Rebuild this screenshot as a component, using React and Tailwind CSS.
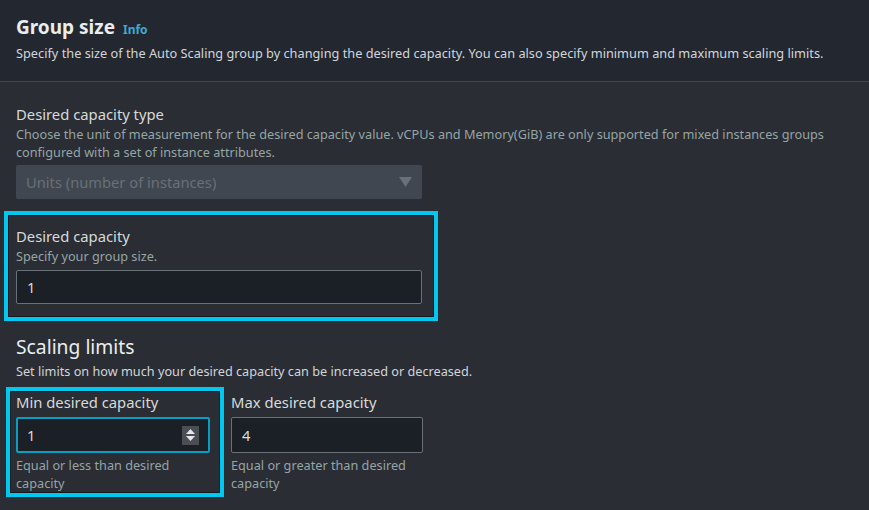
import React from 'react';

const font = { fontFamily: '"Noto Sans", "Open Sans", sans-serif' };

const Stepper = () => (
  <div className="w-[17px] h-[19px] bg-[#4b4f55] flex flex-col items-center justify-center gap-[2px]">
    <svg width="9" height="5" viewBox="0 0 9 5"><path d="M4.5 0 L9 5 L0 5 Z" fill="#e6e6e6" /></svg>
    <svg width="9" height="5" viewBox="0 0 9 5"><path d="M0 0 L9 0 L4.5 5 Z" fill="#e6e6e6" /></svg>
  </div>
);

export default function App() {
  return (
    <div className="w-[869px] h-[510px] overflow-hidden bg-[#2a2d33] text-[#d5dbdb]" style={font}>
      <div className="bg-[#232830] h-[82px] px-4 pt-[14px] border-b border-[#414750]">
        <div className="flex items-baseline gap-2">
          <h2 className="text-[19px] font-bold text-[#eaeded] leading-[26px]">Group size</h2>
          <span className="text-[12px] font-bold text-[#3fa9d5]">Info</span>
        </div>
        <p className="text-[12.75px] text-[#d1d5db] mt-[3px] leading-[20px]">
          Specify the size of the Auto Scaling group by changing the desired capacity. You can also specify minimum and maximum scaling limits.
        </p>
      </div>

      <div className="px-4 pt-[22px]">
        <div className="text-[14.8px] text-[#d5dbdb] leading-[20px]">Desired capacity type</div>
        <p className="text-[12.7px] text-[#95a5a6] leading-[18px] mt-[1px] w-[820px]">
          Choose the unit of measurement for the desired capacity value. vCPUs and Memory(GiB) are only supported for mixed instances groups configured with a set of instance attributes.
        </p>
        <div className="mt-[4px] w-[406px] h-[34px] bg-[#414750] rounded-[2px] flex items-center justify-between px-[10px]">
          <span className="text-[14.7px] text-[#687078]">Units (number of instances)</span>
          <svg width="13" height="10" viewBox="0 0 13 10"><path d="M0 0 L13 0 L6.5 10 Z" fill="#687078" /></svg>
        </div>
      </div>

      <div className="ml-[4px] mt-[12px] w-[434px] border-4 border-[#00c8f0]">
        <div className="border border-[#16191f] px-[7px] pt-[10px] pb-[12px]">
          <div className="text-[14.8px] text-[#d5dbdb] leading-[20px]">Desired capacity</div>
          <div className="text-[12.7px] text-[#95a5a6] leading-[18px] mt-[1px]">Specify your group size.</div>
          <div className="mt-[5px] w-[406px] h-[34px] bg-[#1b1f26] border border-[#687078] rounded-[2px] flex items-center px-[10px] text-[14.7px] text-[#d5dbdb]">1</div>
        </div>
      </div>

      <div className="px-4 pt-[14px]">
        <h3 className="text-[19.3px] text-[#eaeded] leading-[24px]">Scaling limits</h3>
        <p className="text-[12.7px] text-[#d1d5db] leading-[18px] mt-[3px]">Set limits on how much your desired capacity can be increased or decreased.</p>
      </div>

      <div className="flex items-start mt-[7px] ml-[6px]">
        <div className="w-[218px] border-4 border-[#00c8f0]">
          <div className="border border-[#16191f] pl-[5px] pr-[9px] pt-0 pb-0">
            <div className="text-[14.8px] text-[#d5dbdb] leading-[20px]">Min desired capacity</div>
            <div className="mt-[5px] h-[36px] bg-[#1b1f26] border-2 border-[#0a9dc4] rounded-[2px] flex items-center justify-between pl-[9px] pr-[9px] text-[14.7px] text-[#d5dbdb]">
              <span>1</span>
              <Stepper />
            </div>
            <div className="text-[12.7px] text-[#95a5a6] leading-[18px] mt-[3px]">Equal or less than desired capacity</div>
          </div>
        </div>
        <div className="w-[192px] ml-[7px] pt-[5px]">
          <div className="text-[14.8px] text-[#d5dbdb] leading-[20px]">Max desired capacity</div>
          <div className="mt-[5px] h-[36px] bg-[#1b1f26] border border-[#687078] rounded-[2px] flex items-center px-[10px] text-[14.7px] text-[#d5dbdb]">4</div>
          <div className="text-[12.7px] text-[#95a5a6] leading-[18px] mt-[3px]">Equal or greater than desired capacity</div>
        </div>
      </div>
    </div>
  );
}
